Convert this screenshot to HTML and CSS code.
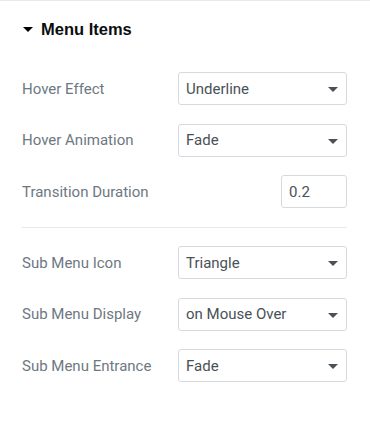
FILE: index.html
```html
<!DOCTYPE html>
<html lang="en">
<head>
  <meta charset="UTF-8">
  <meta name="viewport" content="width=device-width, initial-scale=1.0">
  <title>Menu Items</title>
  <link rel="stylesheet" href="styles.css">
</head>
<body>
  <!-- Section panel -->
  <div class="panel">
    <div class="section-title">
      <span class="caret"></span>
      <h2>Menu Items</h2>
    </div>

    <div class="controls">
      <div class="row">
        <label>Hover Effect</label>
        <div class="select">Underline<span class="arrow"></span></div>
      </div>
      <div class="row">
        <label>Hover Animation</label>
        <div class="select">Fade<span class="arrow"></span></div>
      </div>
      <div class="row">
        <label>Transition Duration</label>
        <div class="number">0.2</div>
      </div>

      <hr class="divider">

      <div class="row">
        <label>Sub Menu Icon</label>
        <div class="select">Triangle<span class="arrow"></span></div>
      </div>
      <div class="row">
        <label>Sub Menu Display</label>
        <div class="select">on Mouse Over<span class="arrow"></span></div>
      </div>
      <div class="row">
        <label>Sub Menu Entrance</label>
        <div class="select">Fade<span class="arrow"></span></div>
      </div>
    </div>
  </div>
</body>
</html>
```

FILE: styles.css
```css
body {
  margin: 0;
  padding: 0;
  background-color: #ffffff;
  font-family: Roboto, Arial, sans-serif;
}
.panel {
  border-top: 1px solid #e6e9ec;
  padding: 0 23px 0 22px;
}
.section-title {
  display: flex;
  align-items: center;
  height: 57px;
}
.caret {
  width: 0;
  height: 0;
  margin-left: 1px;
  margin-right: 8px;
  border-left: 5px solid transparent;
  border-right: 5px solid transparent;
  border-top: 5px solid #000;
}
.section-title h2 {
  margin: 0;
  font-family: "Liberation Sans", Arial, sans-serif;
  font-size: 16.5px;
  font-weight: bold;
  color: #0c0d0e;
}
.controls {
  display: flex;
  flex-direction: column;
  gap: 18.5px;
  padding-top: 14px;
}
.row {
  display: flex;
  align-items: center;
  justify-content: space-between;
  height: 33px;
}
.row label {
  font-size: 15px;
  color: #6d7882;
}
.select {
  position: relative;
  box-sizing: border-box;
  width: 169px;
  height: 33px;
  padding: 0 0 0 7px;
  border: 1px solid #d5dadf;
  border-radius: 3px;
  display: flex;
  align-items: center;
  font-size: 15px;
  color: #495157;
}
.select .arrow {
  position: absolute;
  right: 8px;
  top: 14px;
  width: 0;
  height: 0;
  border-left: 5px solid transparent;
  border-right: 5px solid transparent;
  border-top: 5px solid #495157;
}
.number {
  box-sizing: border-box;
  width: 66px;
  height: 33px;
  padding: 0 0 0 7px;
  border: 1px solid #d5dadf;
  border-radius: 3px;
  display: flex;
  align-items: center;
  font-size: 15px;
  color: #495157;
}
.divider {
  margin: 0;
  border: none;
  border-top: 1px solid #e6e9ec;
}
```
